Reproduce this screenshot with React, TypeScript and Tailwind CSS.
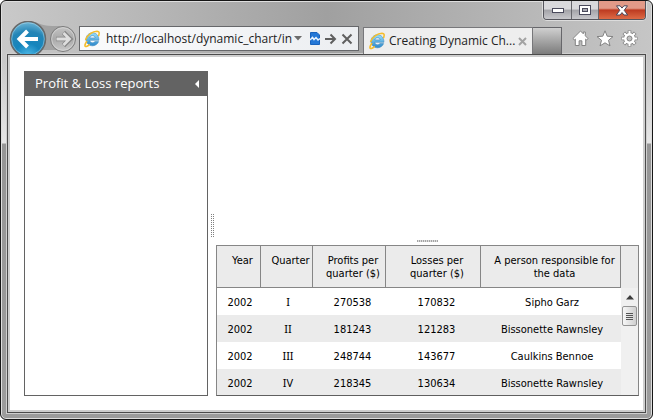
import React from "react";

const rows = [
  ["2002", "I", "270538", "170832", "Sipho Garz"],
  ["2002", "II", "181243", "121283", "Bissonette Rawnsley"],
  ["2002", "III", "248744", "143677", "Caulkins Bennoe"],
  ["2002", "IV", "218345", "130634", "Bissonette Rawnsley"],
];

const headers = [
  { label: "Year", cls: "w-[44px] pl-2" },
  { label: "Quarter", cls: "w-[52px] pl-2" },
  { label: "Profits per quarter ($)", cls: "w-[73px] pl-3 pr-1" },
  { label: "Losses per quarter ($)", cls: "w-[95px] pl-4 pr-2" },
  { label: "A person responsible for the data", cls: "pl-3 pr-1" },
];

const cellStyles = [
  "pt-[2px] pl-[2px]",
  "pl-[2px] font-['Noto_Sans',sans-serif]",
  "pt-[2px] pl-[6px]",
  "pt-[2px] pl-[6px]",
  "pt-[2px] pl-[2px]",
];

function IELogo() {
  return (
    <svg width="18" height="18" viewBox="0 0 18 18" fill="none" aria-hidden="true" className="shrink-0">
      <defs>
        <linearGradient id="ie" x1="0" y1="0" x2="0" y2="1">
          <stop offset="0" stopColor="#9be0fb" />
          <stop offset="1" stopColor="#2b88cb" />
        </linearGradient>
      </defs>
      <path
        d="M9.500 2.800C5.800 2.800 3 5.700 3 9.300s2.800 6.500 6.500 6.500c2.900 0 5.200-1.700 6.100-4.200h-3.700c-.5.8-1.300 1.200-2.300 1.200-1.600 0-2.700-1-2.800-2.500h9.100C16.100 5.800 13.500 2.800 9.500 2.800ZM6.900 7.900c.2-1.300 1.200-2.200 2.600-2.200s2.500.9 2.600 2.200Z"
        fill="url(#ie)"
        stroke="#2b7fb8"
        strokeWidth=".5"
      />
      <path
        d="M3.700 11.500C1.200 15.200 1.400 17.300 4 16.200c.7-.3 1.400-.8 2.200-1.400M2.700 9.500C4.400 4.800 9.700 1.300 14 1.200c2.200 0 2.700 1.500 1.700 4.300"
        stroke="#f5bd2c"
        strokeWidth="1.600"
        strokeLinecap="round"
      />
    </svg>
  );
}

function CaptionButtons() {
  return (
    <div className="flex h-[19px] w-[103px] overflow-hidden rounded-b-[4px] border border-t-0 border-[#55555c] shadow-[0_0_0_1px_#dcdcdc]">
      <button aria-label="Minimize" className="flex w-[28px] items-center justify-center border-r border-[#66666c] bg-linear-to-b from-[#d9d9dc] from-45% via-[#a3a3a8] via-50% to-[#c8c8cc]">
        <svg width="14" height="8" viewBox="0 0 14 8">
          <rect x="1.500" y="2.500" width="11" height="4" fill="#fff" stroke="#4a4a5c" />
        </svg>
      </button>
      <button aria-label="Maximize" className="flex w-[27px] items-center justify-center border-r border-[#66666c] bg-linear-to-b from-[#d9d9dc] from-45% via-[#a3a3a8] via-50% to-[#c8c8cc]">
        <svg width="12" height="11" viewBox="0 0 12 11">
          <rect x=".5" y=".5" width="11" height="9" fill="#fff" stroke="#4a4a5c" />
          <rect x="3.500" y="3.500" width="5" height="3" fill="#aaaab2" stroke="#4a4a5c" />
        </svg>
      </button>
      <button aria-label="Close window" className="flex flex-1 items-center justify-center bg-linear-to-b from-[#e29a88] from-40% via-[#bd3a20] via-50% to-[#dd6a45]">
        <svg width="14" height="11" viewBox="0 0 14 11">
          <path
            d="M1.500.8h3.600L7 3.100 8.900.8h3.600L9.200 5.300l3.500 4.700H9L7 7.600 5 10H1.300l3.500-4.700Z"
            fill="#fff"
            stroke="#4b4658"
          />
        </svg>
      </button>
    </div>
  );
}

function NavButtons() {
  return (
    <div className="relative h-[33px] w-[70px] shrink-0 overflow-hidden">
      <svg width="70" height="36" viewBox="0 0 70 36" className="absolute top-0 left-0" aria-hidden="true">
        <defs>
          <radialGradient id="back" cx=".5" cy="1" r=".95">
            <stop offset="0" stopColor="#54bdea" />
            <stop offset=".4" stopColor="#1585bd" />
            <stop offset=".75" stopColor="#2485b6" />
            <stop offset="1" stopColor="#63afd2" />
          </radialGradient>
          <linearGradient id="fwd" x1="0" y1="0" x2="0" y2="1">
            <stop offset="0" stopColor="#c4c4c4" />
            <stop offset=".5" stopColor="#a9a9a9" />
            <stop offset="1" stopColor="#cacaca" />
          </linearGradient>
        </defs>
        <path d="M19 0c8 0 13 5 24 5h11v24H19Z" fill="#a2a2a2" />
        <circle cx="19" cy="18" r="17.500" fill="url(#back)" stroke="#696969" strokeWidth="1.500" />
        <circle cx="19" cy="18" r="16.300" fill="none" stroke="#b5dcec" strokeOpacity=".5" />
        <path d="M18.500 10 10.500 18l8 8M11.500 18H29" fill="none" stroke="#fff" strokeWidth="4" />
        <circle cx="54" cy="18" r="12.500" fill="url(#fwd)" stroke="#7b7b7b" />
        <circle cx="54" cy="18" r="11.300" fill="none" stroke="#d9d9d9" strokeOpacity=".7" />
        <path d="M54.500 11.500 61 18l-6.500 6.500M60 18H47" fill="none" stroke="#868686" strokeWidth="4.600" />
        <path d="M54.500 12 60.500 18l-6 6M60 18H47.500" fill="none" stroke="#dedede" strokeWidth="2.800" />
      </svg>
      <button aria-label="Back" className="absolute top-0 left-0 h-[33px] w-[38px] rounded-full" />
      <button aria-label="Forward" className="absolute top-[5px] left-[41px] size-[26px] rounded-full" />
    </div>
  );
}

function AddressBar() {
  return (
    <div className="mt-[5px] flex h-[25px] min-w-[200px] flex-[0_1_280px] items-center border border-[#66676a] bg-linear-to-r from-[#fafbfc] to-[#eceef1] pl-[3px]">
      <IELogo />
      <input
        aria-label="Address"
        defaultValue="http://localhost/dynamic_chart/in"
        className="ml-[5px] w-0 min-w-0 flex-1 bg-transparent text-[12px] text-[#1c1c1c] outline-none"
      />
      <button aria-label="Show address list" className="mr-[8px]">
        <svg width="8" height="5" viewBox="0 0 8 5"><path d="M0 0h8L4 4.500Z" fill="#6b6b6b" /></svg>
      </button>
      <button aria-label="Compatibility view" className="mr-[4px]">
        <svg width="10" height="13" viewBox="0 0 10 13">
          <path d="M.5.500h6.500L9.500 3v9.500H.5Z" fill="#2377d6" stroke="#1862bd" />
          <path d="M0 8 2.500 5.500 4 7.500 6 5.500l2 2.500 2-1.500" fill="none" stroke="#eaf3fd" strokeWidth="1.500" />
        </svg>
      </button>
      <button aria-label="Go" className="mr-[4px]">
        <svg width="13" height="12" viewBox="0 0 13 12">
          <path d="M1 6h10M6.500 1.500 11 6l-4.500 4.500" fill="none" stroke="#5f5f5f" strokeWidth="2" />
        </svg>
      </button>
      <button aria-label="Stop" className="mr-[5px]">
        <svg width="12" height="12" viewBox="0 0 12 12">
          <path d="m1.500 1.500 9 9m0-9-9 9" fill="none" stroke="#5f5f5f" strokeWidth="2" />
        </svg>
      </button>
    </div>
  );
}

function Tools() {
  return (
    <div className="mt-[9px] ml-auto flex h-[17px] items-center gap-[7px] pr-[8px]">
      <button aria-label="Home">
        <svg width="17" height="17" viewBox="0 0 17 17">
          <path
            d="M8.500 1 .9 8.600l1.500 1.300.9-.8v6.400h3.800v-4.700h2.800v4.700h3.800V9.100l.9.800 1.500-1.300-2.800-2.800V2h-2v1.800Z"
            fill="#fff"
            stroke="#838383"
          />
        </svg>
      </button>
      <button aria-label="Favorites">
        <svg width="18" height="17" viewBox="0 0 18 17">
          <path d="m9 .8 2.200 5.400 5.800.4-4.500 3.700 1.500 5.600L9 12.800l-5 3.100 1.500-5.600L1 6.600l5.800-.4Z" fill="#fff" stroke="#838383" />
        </svg>
      </button>
      <button aria-label="Tools">
        <svg width="17" height="17" viewBox="0 0 17 17">
          <path d="M8.500.5v16M.5 8.500h16M2.800 2.800l11.400 11.400M14.200 2.800 2.800 14.200" stroke="#838383" strokeWidth="3.600" />
          <circle cx="8.500" cy="8.500" r="6.200" fill="#838383" />
          <path d="M8.500 1v15M1 8.500h15M3.200 3.200l10.600 10.600M13.800 3.200 3.200 13.800" stroke="#fff" strokeWidth="2" />
          <circle cx="8.500" cy="8.500" r="5.400" fill="#fff" />
          <circle cx="8.500" cy="8.500" r="2.500" fill="#c0c0c0" stroke="#838383" />
        </svg>
      </button>
    </div>
  );
}

function DataGrid() {
  return (
    <div className="flex h-[151px] overflow-hidden border border-[#868686] border-b-[#5f5f5f] font-['DejaVu_Sans_Condensed','DejaVu_Sans',sans-serif] text-[11px] leading-[13px] text-black">
      <div className="min-w-0 flex-1">
        <table className="w-full table-fixed border-separate border-spacing-0 text-center">
          <thead>
            <tr className="h-[42px] bg-[#ebebeb]">
              {headers.map((h) => (
                <th key={h.label} scope="col" className={`border-r border-b border-[#868686] pt-[8px] align-top font-normal ${h.cls}`}>
                  {h.label}
                </th>
              ))}
            </tr>
          </thead>
          <tbody>
            {rows.map((r) => (
              <tr key={r[1]} className="h-[27px] even:bg-[#ebebeb]">
                {r.map((c, i) => (
                  <td key={i} className={`whitespace-nowrap ${cellStyles[i]}`}>{c}</td>
                ))}
              </tr>
            ))}
          </tbody>
        </table>
      </div>
      <div className="flex w-[17px] flex-col bg-[#f0f0f0]">
        <div className="h-[42px] bg-[#ebebeb]" />
        <button aria-label="Scroll up" className="flex h-[18px] items-center justify-center">
          <svg width="8" height="5" viewBox="0 0 8 5"><path d="M4 0 8 4.500H0Z" fill="#3c3c3c" /></svg>
        </button>
        <div className="mx-px flex h-[20px] flex-col items-center justify-center gap-px rounded-[2px] border border-[#949494] bg-linear-to-r from-[#f7f7f7] to-[#cfcfcf]">
          <i className="h-px w-[7px] bg-[#555]" />
          <i className="h-px w-[7px] bg-[#555]" />
          <i className="h-px w-[7px] bg-[#555]" />
          <i className="h-px w-[7px] bg-[#555]" />
        </div>
      </div>
    </div>
  );
}

export default function App() {
  return (
    <div className="flex h-screen min-h-[300px] flex-col overflow-hidden rounded-[6px] border border-[#161616] bg-[linear-gradient(to_bottom,transparent_60px,#e6e6e6_142px,#969696_143px,#9c9c9c_100%),linear-gradient(to_right,#c9c9c9,#a0a0a0_50%,#c6c6c6)] px-[6px] pb-[6px] font-['Open_Sans',sans-serif] shadow-[inset_0_0_0_1px_#dedede]">
      <header className="relative flex h-[53px] shrink-0 items-start pt-[20px]">
        <div className="absolute top-0 right-0">
          <CaptionButtons />
        </div>
        <div className="pl-[2px]">
          <NavButtons />
        </div>
        <AddressBar />
        <div className="mt-[6px] ml-[4px] flex h-[27px] min-w-0">
          <div className="flex w-[170px] items-center border border-b-0 border-[#77777a] bg-[#eeeeee] pl-[4px]">
            <IELogo />
            <span className="ml-[3px] flex-1 truncate text-[12px] text-[#222]">Creating Dynamic Ch...</span>
            <button aria-label="Close tab" className="mr-[5px]">
              <svg width="9" height="9" viewBox="0 0 9 9"><path d="m1 1 7 7m0-7L1 8" stroke="#a3a3a3" strokeWidth="2" /></svg>
            </button>
          </div>
          <button aria-label="New tab" className="w-[29px] border border-b-0 border-l-0 border-[#66666a] bg-linear-to-b from-[#d0d0d0] to-[#7c7c7c]" />
        </div>
        <Tools />
      </header>

      <main className="flex min-h-0 flex-1 border border-[#4b4b4b] bg-white pt-[16px] pr-[6px] pb-[16px] pl-[16px] shadow-[0_0_0_1px_#cfcfcf,inset_0_0_0_2px_#cecece]">
        <section className="flex w-[184px] shrink-0 flex-col border border-[#636363]">
          <div className="flex h-[24px] items-center justify-between bg-[#636363] pr-[8px] pl-[10px] text-white">
            <h2 className="pb-[3px] text-[13px] leading-[18px] font-medium">Profit &amp; Loss reports</h2>
            <button aria-label="Collapse panel">
              <svg width="4" height="8" viewBox="0 0 4 8"><path d="M4 0v8L0 4Z" fill="#fff" /></svg>
            </button>
          </div>
        </section>
        <div role="separator" aria-orientation="vertical" className="flex w-[8px] shrink-0 items-center justify-center">
          <svg width="3" height="24" viewBox="0 0 3 24" className="mb-[16px]" aria-hidden="true">
            <path d="M.5 0v24M2.500 0v24" stroke="#808080" strokeDasharray="1 1" />
          </svg>
        </div>
        <div className="flex min-w-0 flex-1 flex-col">
          <div className="flex-1" />
          <div role="separator" aria-orientation="horizontal" className="flex h-[5px] items-start justify-center">
            <div className="h-[2px] w-[21px] bg-[repeating-linear-gradient(to_right,#a5a5a5_0_1px,#dcdcdc_1px_2px)]" />
          </div>
          <DataGrid />
        </div>
      </main>
    </div>
  );
}
